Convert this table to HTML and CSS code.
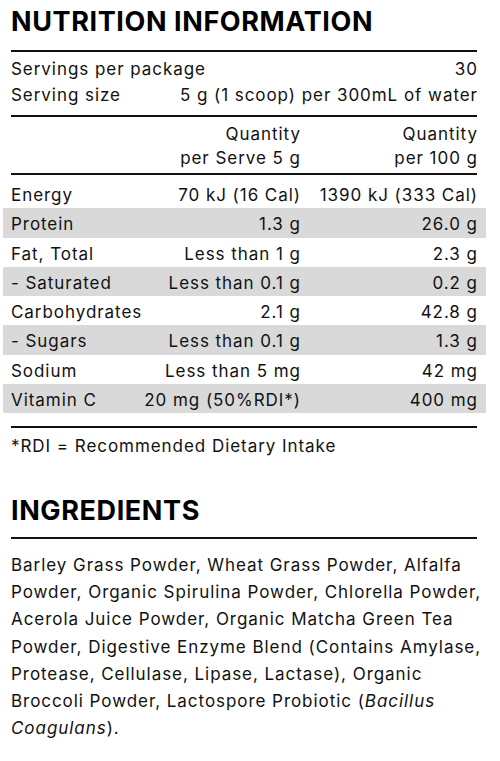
FILE: index.html
```html
<!DOCTYPE html>
<html>
<head>
<meta charset="utf-8">
<link rel="stylesheet" href="styles.css">
</head>
<body>
<div class="page">
  <h1 class="title">NUTRITION INFORMATION</h1>
  <div class="rule"></div>
  <div class="serving">
    <div class="srow"><span>Servings per package</span><span class="end">30</span></div>
    <div class="srow"><span>Serving size</span><span class="end">5 g (1 scoop) per 300mL of water</span></div>
  </div>
  <div class="rule"></div>
  <div class="head">
    <span></span>
    <span class="num">Quantity<br>per Serve 5 g</span>
    <span class="num">Quantity<br>per 100 g</span>
  </div>
  <div class="rule"></div>
  <div class="rows">
    <div class="row"><span>Energy</span><span class="num">70 kJ (16 Cal)</span><span class="num">1390 kJ (333 Cal)</span></div>
    <div class="row shade"><span>Protein</span><span class="num">1.3 g</span><span class="num">26.0 g</span></div>
    <div class="row"><span>Fat, Total</span><span class="num">Less than 1 g</span><span class="num">2.3 g</span></div>
    <div class="row shade"><span>- Saturated</span><span class="num">Less than 0.1 g</span><span class="num">0.2 g</span></div>
    <div class="row"><span>Carbohydrates</span><span class="num">2.1 g</span><span class="num">42.8 g</span></div>
    <div class="row shade"><span>- Sugars</span><span class="num">Less than 0.1 g</span><span class="num">1.3 g</span></div>
    <div class="row"><span>Sodium</span><span class="num">Less than 5 mg</span><span class="num">42 mg</span></div>
    <div class="row shade"><span>Vitamin C</span><span class="num">20 mg (50%RDI*)</span><span class="num">400 mg</span></div>
  </div>
  <div class="rule rule-end"></div>
  <p class="note">*RDI = Recommended Dietary Intake</p>
  <h2 class="title title-ing">INGREDIENTS</h2>
  <div class="rule"></div>
  <p class="ing">Barley Grass Powder, Wheat Grass Powder, Alfalfa<br>Powder, Organic Spirulina Powder, Chlorella Powder,<br>Acerola Juice Powder, Organic Matcha Green Tea<br>Powder, Digestive Enzyme Blend (Contains Amylase,<br>Protease, Cellulase, Lipase, Lactase), Organic<br>Broccoli Powder, Lactospore Probiotic (<em>Bacillus</em><br><em>Coagulans</em>).</p>
</div>
</body>
</html>
```
FILE: styles.css
```css
* { box-sizing: border-box; }
html, body { margin: 0; padding: 0; background: #fff; }
body {
  font-family: Inter, "Noto Sans", sans-serif;
  font-size: 17px;
  letter-spacing: 0.95px;
  color: #111;
}
.page {
  width: 466px;
  margin-left: 11px;
  padding-top: 6px;
}
.title {
  margin: 0;
  font-size: 27px;
  line-height: 32px;
  font-weight: 700;
  letter-spacing: 0.6px;
  color: #000;
}
.rule {
  height: 2px;
  background: #111;
  margin-top: 12px;
}
.serving {
  padding-top: 4px;
}
.srow {
  display: flex;
  justify-content: space-between;
  line-height: 26px;
  white-space: nowrap;
}
.end { margin-right: -0.95px; }
.serving + .rule { margin-top: 7px; }
.head {
  display: grid;
  grid-template-columns: 120px 169px 177px;
  line-height: 24px;
  padding-top: 5px;
}
.head + .rule { margin-top: 3px; }
.num { text-align: right; white-space: nowrap; margin-right: -0.95px; }
.rows { margin-top: 4px; }
.row {
  display: grid;
  grid-template-columns: 120px 169px 177px;
  line-height: 26px;
  height: 29.25px;
  padding: 3px 9px 0 8px;
  margin: 0 -9px 0 -8px;
  white-space: nowrap;
}
.shade { background: #d9d9d9; }
.rule-end { margin-top: 13px; }
.note {
  margin: 5px 0 0;
  line-height: 26px;
}
.title-ing { margin-top: 36px; }
.title-ing + .rule { margin-top: 10px; }
.ing {
  margin: 13px 0 0;
  line-height: 27.2px;
  white-space: nowrap;
}
.ing em { font-style: italic; }
```
